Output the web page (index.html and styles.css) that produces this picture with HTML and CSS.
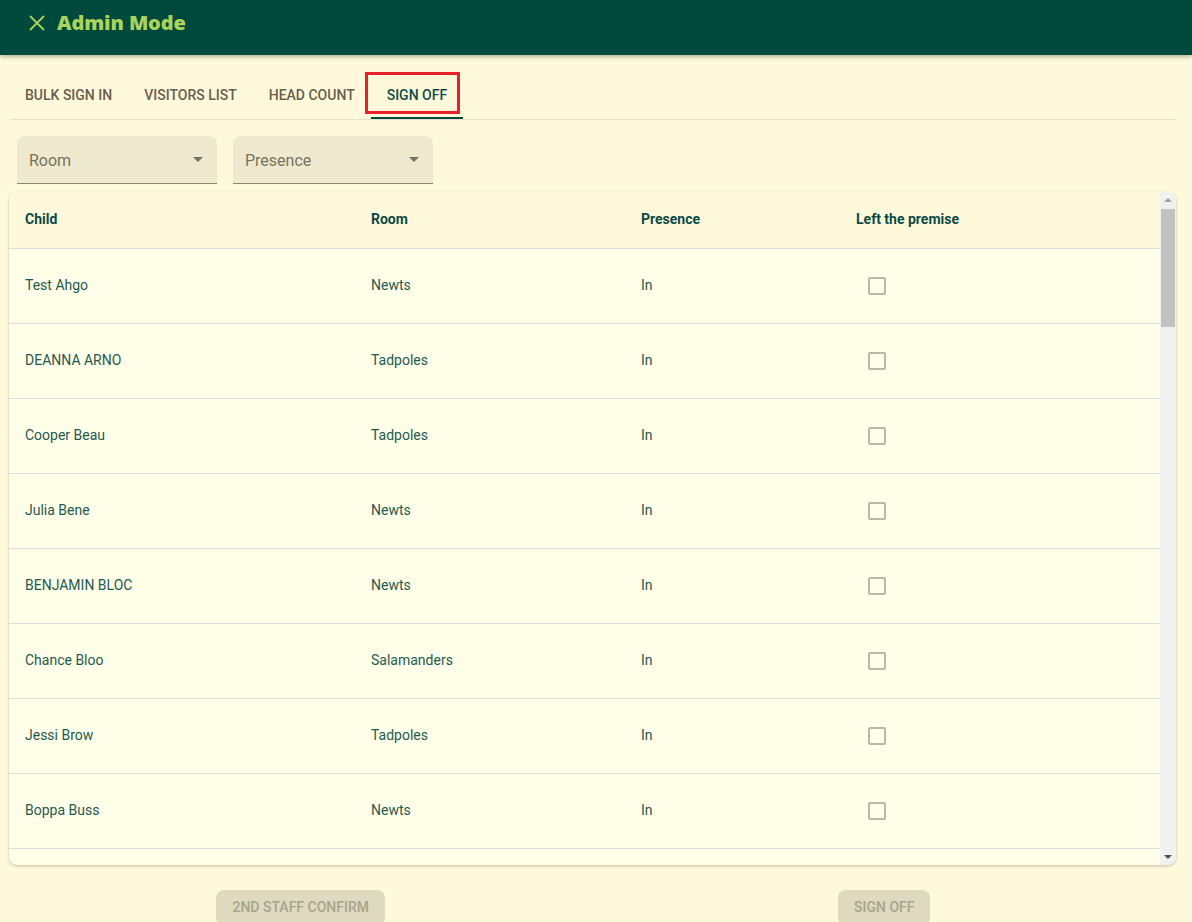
FILE: index.html
```html
<!DOCTYPE html>
<html>
<head>
<meta charset="utf-8">
<link rel="stylesheet" href="styles.css">
</head>
<body>
<header class="topbar">
  <svg class="close-icon" width="16" height="16" viewBox="0 0 16 16"><path d="M1 1 L15 15 M15 1 L1 15" stroke="#a9d35b" stroke-width="1.8" fill="none"/></svg>
  <h1 class="title">Admin Mode</h1>
</header>
<main class="content">
  <nav class="tabs">
    <div class="tab">BULK SIGN IN</div>
    <div class="tab">VISITORS LIST</div>
    <div class="tab">HEAD COUNT</div>
    <div class="tab active">SIGN OFF<span class="annot"></span></div>
  </nav>
  <div class="filters">
    <div class="select"><span>Room</span><span class="caret"></span></div>
    <div class="select"><span>Presence</span><span class="caret"></span></div>
  </div>
  <section class="card">
    <div class="table-area">
      <div class="row head">
        <div class="c1">Child</div><div class="c2">Room</div><div class="c3">Presence</div><div class="c4">Left the premise</div>
      </div>
      <div class="row"><div class="c1">Test Ahgo</div><div class="c2">Newts</div><div class="c3">In</div><div class="c4"><span class="cb"></span></div></div>
      <div class="row"><div class="c1">DEANNA ARNO</div><div class="c2">Tadpoles</div><div class="c3">In</div><div class="c4"><span class="cb"></span></div></div>
      <div class="row"><div class="c1">Cooper Beau</div><div class="c2">Tadpoles</div><div class="c3">In</div><div class="c4"><span class="cb"></span></div></div>
      <div class="row"><div class="c1">Julia Bene</div><div class="c2">Newts</div><div class="c3">In</div><div class="c4"><span class="cb"></span></div></div>
      <div class="row"><div class="c1">BENJAMIN BLOC</div><div class="c2">Newts</div><div class="c3">In</div><div class="c4"><span class="cb"></span></div></div>
      <div class="row"><div class="c1">Chance Bloo</div><div class="c2">Salamanders</div><div class="c3">In</div><div class="c4"><span class="cb"></span></div></div>
      <div class="row"><div class="c1">Jessi Brow</div><div class="c2">Tadpoles</div><div class="c3">In</div><div class="c4"><span class="cb"></span></div></div>
      <div class="row"><div class="c1">Boppa Buss</div><div class="c2">Newts</div><div class="c3">In</div><div class="c4"><span class="cb"></span></div></div>
      <div class="row"></div>
    </div>
    <div class="scrollbar">
      <span class="arrow up"></span>
      <div class="track"><div class="thumb"></div></div>
      <span class="arrow down"></span>
    </div>
  </section>
  <div class="actions">
    <div class="act"><button class="btn">2ND STAFF CONFIRM</button></div>
    <div class="act"><button class="btn">SIGN OFF</button></div>
  </div>
</main>
</body>
</html>
```
FILE: styles.css
```css
* { box-sizing: border-box; }
html, body { margin: 0; padding: 0; }
body {
  background: #fff9dc;
  font-family: Roboto, "Liberation Sans", sans-serif;
  width: 1192px;
  height: 922px;
  overflow: hidden;
}
.topbar {
  height: 55px;
  background: #004a3d;
  display: flex;
  align-items: center;
  padding-left: 29px;
  padding-bottom: 11px;
  box-shadow: 0 2px 4px rgba(60, 50, 20, 0.35);
  position: relative;
  z-index: 2;
}
.close-icon { margin-top: 1px; }
.title {
  margin: 0 0 0 12px;
  font-family: "Open Sans", sans-serif;
  font-weight: 800;
  font-size: 20px;
  color: #a9d35b;
  letter-spacing: -0.1px;
}
.content {
  padding: 16px 16px 0 9px;
}
.tabs {
  display: flex;
  border-bottom: 1px solid #e6e1c8;
  margin-left: 1px;
  height: 49px;
}
.tab {
  height: 48px;
  padding: 0 16px;
  display: flex;
  align-items: center;
  font-size: 14px;
  font-weight: 500;
  color: #6a5d4c;
  position: relative;
}
.tab:first-child { margin-left: -1px; }
.tab.active {
  color: #0e4d48;
  border-bottom: 2px solid #004a3d;
  padding-top: 2px;
}
.annot {
  position: absolute;
  left: -6px;
  top: 1px;
  width: 95px;
  height: 42px;
  border: 3px solid #e8202a;
}
.filters {
  display: flex;
  gap: 16px;
  padding: 16px 0 0 8px;
}
.select {
  width: 200px;
  height: 48px;
  background: #efe9cf;
  border-radius: 8px 8px 0 0;
  border-bottom: 1px solid #8c876f;
  display: flex;
  align-items: center;
  justify-content: space-between;
  padding: 0 14px 0 12px;
  font-size: 16px;
  color: #77725f;
}
.select span:first-child { margin-top: 2px; }
.caret {
  width: 0; height: 0;
  border-left: 5px solid transparent;
  border-right: 5px solid transparent;
  border-top: 5px solid #77725f;
}
.card {
  margin-top: 8px;
  height: 673px;
  background: #fffee9;
  border-radius: 8px;
  box-shadow: 0 1px 3px rgba(90, 80, 40, 0.35);
  display: flex;
  overflow: hidden;
}
.table-area {
  flex: 1;
  overflow: hidden;
}
.row {
  display: flex;
  height: 75px;
  align-items: center;
  border-bottom: 1px solid #dddde0;
  font-size: 14px;
  color: #1f5a4f;
  padding-bottom: 2px;
}
.row.head {
  height: 57px;
  background: #fff9db;
  font-weight: 700;
  color: #0b4a47;
  padding-bottom: 2px;
}
.c1 { width: 362px; padding-left: 16px; }
.c2 { width: 270px; }
.c3 { width: 215px; }
.c4 { flex: 1; }
.cb {
  display: block;
  width: 18px;
  height: 18px;
  margin-left: 12px;
  margin-top: 1px;
  border: 2px solid #bab8a7;
  border-radius: 2px;
}
.scrollbar {
  width: 16px;
  background: #f1f1f1;
  display: flex;
  flex-direction: column;
  align-items: center;
}
.arrow {
  width: 0; height: 0;
  border-left: 4px solid transparent;
  border-right: 4px solid transparent;
}
.arrow.up { border-bottom: 4px solid #a3a3a3; margin: 6px 0 7px; }
.arrow.down { border-top: 4px solid #505050; margin: 7px 0 6px; }
.track { flex: 1; width: 100%; padding: 0 1px; }
.thumb { height: 118px; background: #c1c1c1; }
.actions {
  display: flex;
  margin-top: 25px;
}
.act {
  flex: 1;
  display: flex;
  justify-content: center;
}
.btn {
  height: 36px;
  border: none;
  border-radius: 8px;
  background: #ded9bf;
  color: #a8a48c;
  font-family: Roboto, "Liberation Sans", sans-serif;
  font-weight: 500;
  font-size: 14px;
  padding: 0 16px;
  padding-bottom: 2px;
}
```
